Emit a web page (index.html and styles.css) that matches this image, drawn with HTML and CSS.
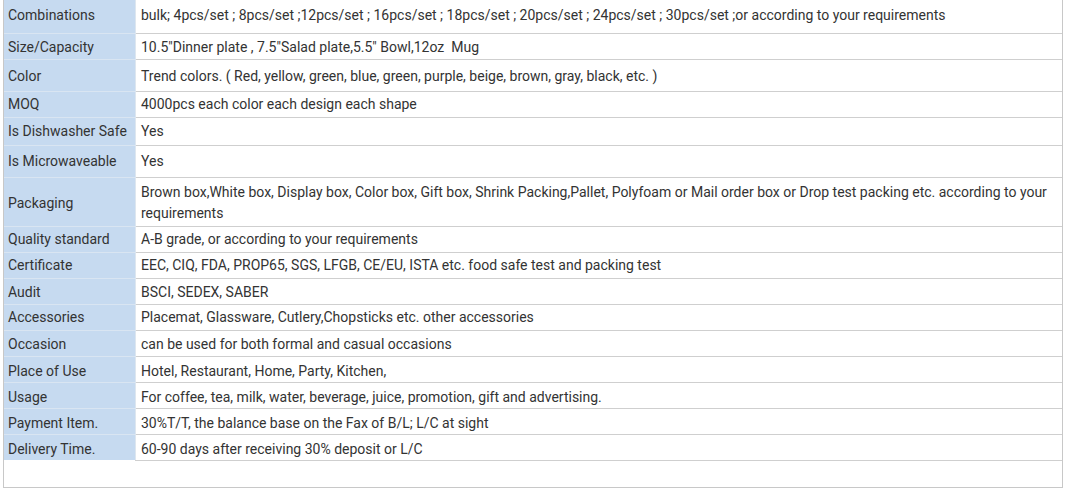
FILE: index.html
```html
<!DOCTYPE html>
<html>
<head>
<meta charset="utf-8">
<link rel="stylesheet" href="styles.css">
</head>
<body>
<div class="sheet">
  <table class="spec">
    <tr class="h33 first"><th>Combinations</th><td>bulk; 4pcs/set ; 8pcs/set ;12pcs/set ; 16pcs/set ; 18pcs/set ; 20pcs/set ; 24pcs/set ; 30pcs/set ;or according to your requirements</td></tr>
    <tr class="h26 low"><th>Size/Capacity</th><td>10.5"Dinner plate , 7.5"Salad plate,5.5" Bowl,12oz&nbsp; Mug</td></tr>
    <tr class="h32 low"><th>Color</th><td>Trend colors. ( Red, yellow, green, blue, green, purple, beige, brown, gray, black, etc. )</td></tr>
    <tr class="h26"><th>MOQ</th><td>4000pcs each color each design each shape</td></tr>
    <tr class="h28"><th>Is Dishwasher Safe</th><td>Yes</td></tr>
    <tr class="h32"><th>Is Microwaveable</th><td>Yes</td></tr>
    <tr class="h49 pack"><th>Packaging</th><td>Brown box,White box, Display box, Color box, Gift box, Shrink Packing,Pallet, Polyfoam or Mail order box or Drop test packing etc. according to your requirements</td></tr>
    <tr class="h26"><th>Quality standard</th><td>A-B grade, or according to your requirements</td></tr>
    <tr class="h26"><th>Certificate</th><td>EEC, CIQ, FDA, PROP65, SGS, LFGB, CE/EU, ISTA etc. food safe test and packing test</td></tr>
    <tr class="h26 low"><th>Audit</th><td>BSCI, SEDEX, SABER</td></tr>
    <tr class="h26"><th>Accessories</th><td>Placemat, Glassware, Cutlery,Chopsticks etc. other accessories</td></tr>
    <tr class="h26 low"><th>Occasion</th><td>can be used for both formal and casual occasions</td></tr>
    <tr class="h26 lower"><th>Place of Use</th><td>Hotel, Restaurant, Home, Party, Kitchen,</td></tr>
    <tr class="h26 lower"><th>Usage</th><td>For coffee, tea, milk, water, beverage, juice, promotion, gift and advertising.</td></tr>
    <tr class="h26 lower"><th>Payment Item.</th><td>30%T/T, the balance base on the Fax of B/L; L/C at sight</td></tr>
    <tr class="h26 lower"><th>Delivery Time.</th><td>60-90 days after receiving 30% deposit or L/C</td></tr>
  </table>
  <div class="empty"></div>
</div>
</body>
</html>
```
FILE: styles.css
```css
html, body {
  margin: 0;
  padding: 0;
  background: #ffffff;
}
body {
  font-family: Roboto, "Liberation Sans", Arial, sans-serif;
  font-size: 14px;
  color: #333333;
}
.sheet {
  margin-left: 3px;
  width: 1058px;
  border-left: 1px solid #c8c8c8;
  border-right: 1px solid #c8c8c8;
  border-bottom: 1px solid #c8c8c8;
}
.spec {
  width: 100%;
  border-collapse: collapse;
  table-layout: fixed;
}
.spec th {
  width: 127px;
  background: #c6daf0;
  font-weight: normal;
  text-align: left;
  padding: 0 0 0 4px;
  border-bottom: 1px solid #d9e5f2;
  white-space: nowrap;
  vertical-align: middle;
}
.spec td {
  padding: 0 8px 0 5px;
  border-left: 1px solid #dde6ef;
  border-bottom: 1px solid #cfcfcf;
  line-height: 21px;
  vertical-align: middle;
}
.spec tr:last-child th {
  border-bottom: none;
}
.spec .first th,
.spec .first td {
  padding-bottom: 2px;
}
.spec .low th,
.spec .low td {
  padding-top: 2px;
}
.spec .lower th,
.spec .lower td {
  padding-top: 4px;
}
.spec .pack th,
.spec .pack td {
  padding-top: 3px;
}
.h33 { height: 33px; }
.h26 { height: 26px; }
.h28 { height: 28px; }
.h32 { height: 32px; }
.h49 { height: 49px; }
.empty {
  height: 26px;
}
```
